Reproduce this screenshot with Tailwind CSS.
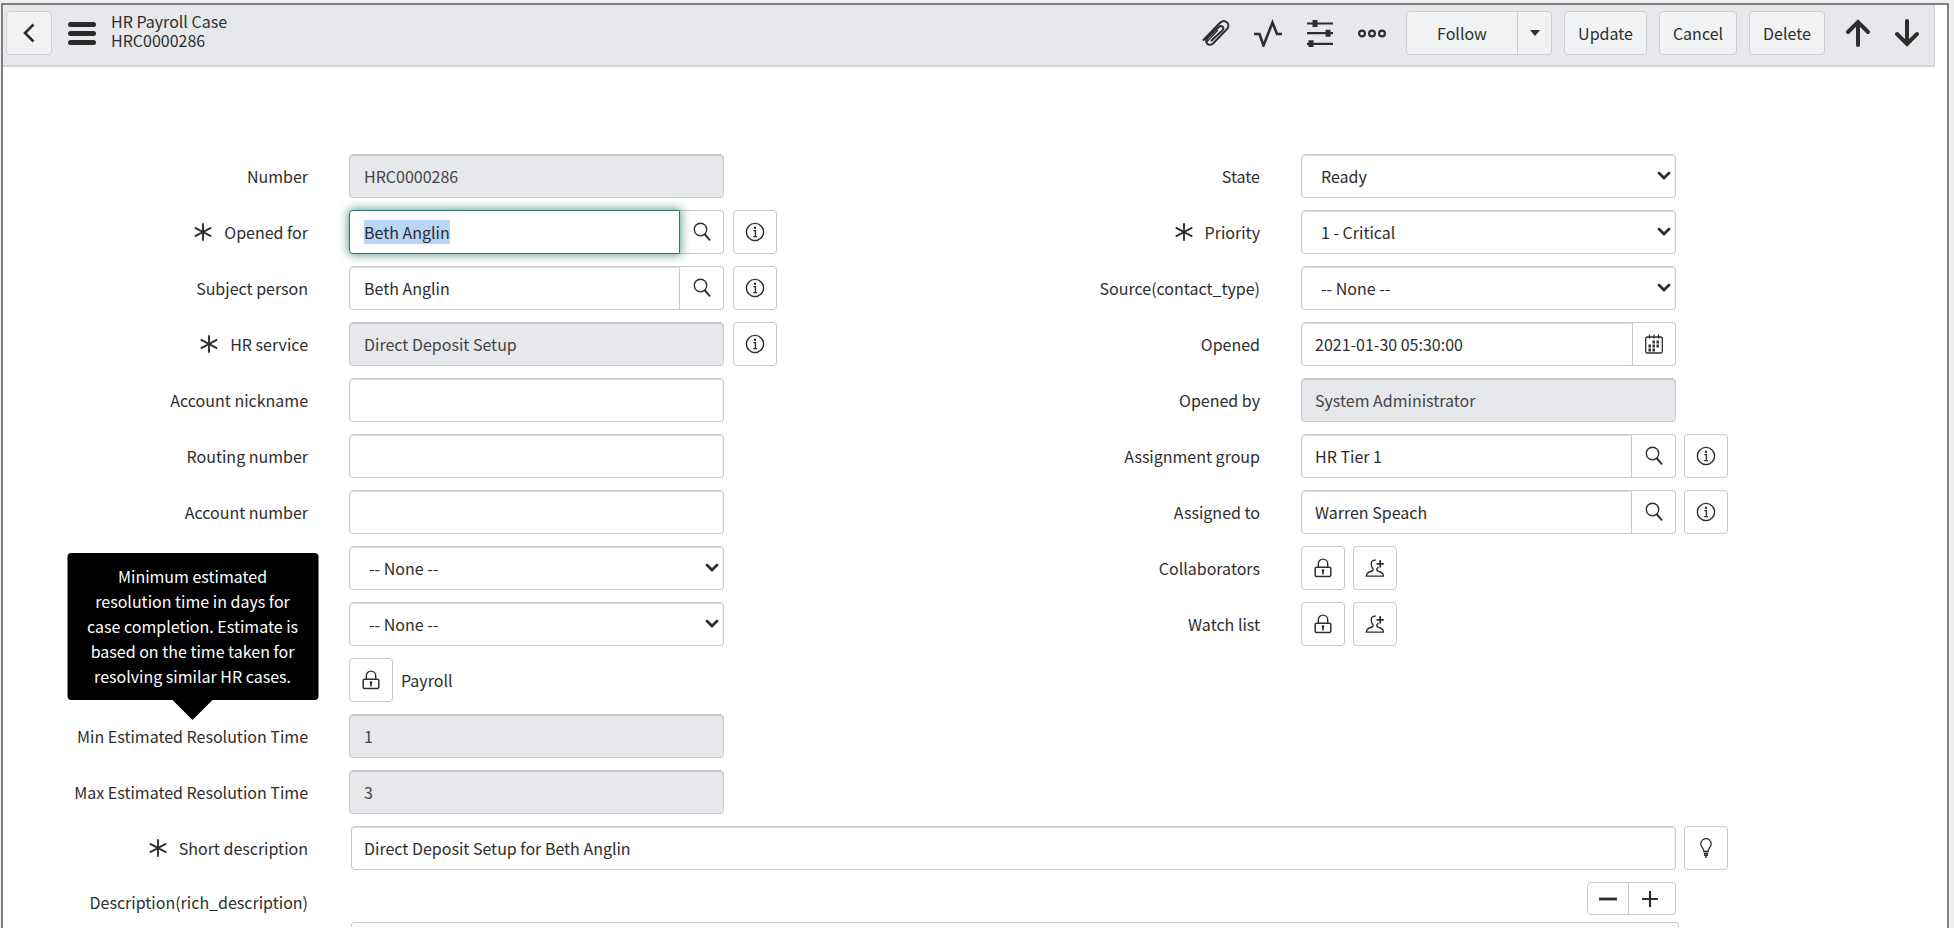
<!DOCTYPE html>
<html lang="en">
<head>
<meta charset="utf-8">
<title>HR Payroll Case HRC0000286</title>
<script src="https://cdn.jsdelivr.net/npm/@tailwindcss/browser@4"></script>
</head>
<body class="min-h-screen bg-[#eeefef] pt-[3px] pl-px pr-[5px] font-['Noto_Sans_CJK_SC',sans-serif] text-base leading-6 text-[#2e2e2e]">

<svg class="hidden" aria-hidden="true">
  <symbol id="search" viewBox="0 0 18 20" fill="none" stroke="currentColor"><ellipse cx="7.5" cy="7.5" rx="6.2" ry="6.2" stroke-width="1.4"/><path d="M11.7 12.2 17 18.3" stroke-width="2"/><path d="m10.8 13 1.8-1.6" stroke-width="1.2"/></symbol>
  <symbol id="info" viewBox="0 0 20 20"><circle cx="10" cy="10" r="8.6" fill="none" stroke="currentColor" stroke-width="1.4"/><circle cx="10" cy="5.8" r="1.2" fill="currentColor"/><path d="M8.4 8.6H10.4V14.4M8.2 14.6H12" fill="none" stroke="currentColor" stroke-width="1.4"/></symbol>
  <symbol id="lock" viewBox="0 0 18 20" fill="none" stroke="currentColor"><rect x="1.2" y="9.2" width="15.6" height="9.4" rx="1.4" stroke-width="1.5"/><path d="M4.3 9V5.8a4.7 4.7 0 0 1 9.4 0V9" stroke-width="1.4"/><path d="M9 13v3.4" stroke-width="1.6"/><circle cx="9" cy="12.6" r="1.3" fill="currentColor" stroke="none"/></symbol>
  <symbol id="person" viewBox="0 0 20 20" fill="none" stroke="currentColor" stroke-width="1.3"><path d="M11 2.200C8 1.600 6.200 3.200 6.200 6c0 2.300.7 3.700 1.900 5 .2 1.500-.5 2-2.400 2.500-3.100.8-4.300 1.800-4.500 4.700h17.300c-.2-2.900-1.500-3.900-4.600-4.700-1.700-.5-2.300-1-2.100-2.500.8-.9 1.200-1.500 1.500-2.300"/><path d="M15.200 2.300v7.200M11.600 5.900h7.200" stroke-width="1.800"/></symbol>
  <symbol id="star" viewBox="0 0 18 18"><path d="M9 .3v17.400M.8 4.600l16.400 8.800M17.200 4.600.8 13.400" fill="none" stroke="currentColor" stroke-width="1.900"/></symbol>
  <symbol id="chevron" viewBox="0 0 14 10"><path d="m2 2 5 5 5-5" fill="none" stroke="currentColor" stroke-width="2.800" stroke-linecap="round"/></symbol>
</svg>

<main class="min-h-[calc(100vh-3px)] border-2 border-b-0 border-[#808080] bg-white">
  <header class="mr-3 flex h-[62px] items-center border-b-2 border-r border-[#d2d3d5] bg-[#e7e8ec] pb-1 pl-[3px] pr-[14px]">
    <button aria-label="Back" class="flex h-11 w-[46px] items-center justify-center rounded border border-[#cbcdcf] bg-[#f0f2f4]">
      <svg class="h-5 w-3" viewBox="0 0 12 20" fill="none" stroke="currentColor" stroke-width="2.600"><path d="M10.500 1.500 2 10l8.500 8.500"/></svg>
    </button>
    <button aria-label="Form menu" class="ml-4 flex w-7 flex-col gap-1">
      <span class="h-[5px] rounded-sm bg-[#2a2a2a]"></span><span class="h-[5px] rounded-sm bg-[#2a2a2a]"></span><span class="h-[5px] rounded-sm bg-[#2a2a2a]"></span>
    </button>
    <h1 class="ml-[15px] pb-1 leading-[19px]">HR Payroll Case<br>HRC0000286</h1>

    <div class="ml-auto flex items-center gap-6">
      <button aria-label="Attachments"><svg class="size-7" viewBox="0 0 28 28" fill="none" stroke="currentColor" stroke-width="2" stroke-linecap="round"><path d="M1.500 21 17.500 4.200c2.400-2.400 5.400-2.700 7.500-.8 2 2 1.800 4.900-.5 7.200L11.300 24.300c-1.800 1.800-4.400 2-6 .4-1.700-1.600-1.500-4.100.4-6L16.800 8.100c1.200-1.200 2.800-1.300 3.800-.3s.9 2.500-.3 3.700L9.500 21.500"/><path d="M5 22.500 15.500 11.500" stroke-width="1.200"/></svg></button>
      <button aria-label="Activity"><svg class="size-7" viewBox="0 0 28 28" fill="none" stroke="currentColor" stroke-width="2.600"><path d="M0 15h5.500l4 11.500L18.500 3.500 23 15h5"/></svg></button>
      <button aria-label="Personalize form"><svg class="size-7" viewBox="0 0 28 28" fill="none" stroke="currentColor" stroke-width="2.200"><path d="M1 4.500h26M1 14.200h26M1 24.800h26"/><path d="M6.500 1h5v7h-5zM19.500 10.700h5v7h-5zM2.500 21.300h5v7h-5z" fill="currentColor" stroke="none"/></svg></button>
      <button aria-label="More options"><svg class="size-7" viewBox="0 0 28 28" fill="none" stroke="currentColor" stroke-width="2.200"><circle cx="4" cy="14.500" r="2.900"/><circle cx="14" cy="14.500" r="2.900"/><circle cx="24" cy="14.500" r="2.900"/></svg></button>
    </div>
    <div class="ml-5 flex items-center gap-3">
      <div class="flex h-11 rounded border border-[#cbcdcf] bg-[#f0f2f4]">
        <button class="w-[110px]">Follow</button>
        <button aria-label="Follow options" class="flex w-[34px] items-center justify-center border-l border-[#cbcdcf]"><svg class="h-[6px] w-[10px]" viewBox="0 0 10 6"><path d="M0 0h10L5 6z" fill="currentColor"/></svg></button>
      </div>
      <button class="h-11 w-[83px] rounded border border-[#cbcdcf] bg-[#f0f2f4]">Update</button>
      <button class="h-11 w-[78px] rounded border border-[#cbcdcf] bg-[#f0f2f4]">Cancel</button>
      <button class="h-11 w-[76px] rounded border border-[#cbcdcf] bg-[#f0f2f4]">Delete</button>
    </div>
    <div class="ml-5 flex gap-[23px]">
      <button aria-label="Previous record"><svg class="h-7 w-[26px]" viewBox="0 0 26 28" fill="none" stroke="currentColor" stroke-width="4" stroke-linecap="round"><path d="M13 26V3M3 13 13 3l10 10"/></svg></button>
      <button aria-label="Next record"><svg class="h-7 w-[26px]" viewBox="0 0 26 28" fill="none" stroke="currentColor" stroke-width="4" stroke-linecap="round"><path d="M13 2v23M3 15l10 10 10-10"/></svg></button>
    </div>
  </header>

  <form class="mr-10 pt-[87px]">
    <div class="grid grid-cols-2">
      <div class="flex flex-col gap-3">
        <div class="grid h-11 grid-cols-[346fr_375fr_231fr] items-center">
          <label for="number" class="pr-[41px] text-right">Number</label>
          <input id="number" readonly value="HRC0000286" class="h-11 w-full min-w-0 rounded border border-[#c6c8ca] bg-[#e7e8ec] px-[14px] text-[#444] shadow-[inset_0_1px_1px_#0002]">
        </div>
        <div class="grid h-11 grid-cols-[346fr_375fr_231fr] items-center">
          <label for="openedfor" class="flex items-center justify-end gap-3 pr-[41px]"><svg class="size-[18px]"><use href="#star"/></svg>Opened for</label>
          <div class="flex min-w-0">
            <div class="relative z-10 h-11 min-w-0 flex-1">
              <input id="openedfor" value="Beth Anglin" class="h-11 w-full rounded-l border border-[#2f7b68] bg-white px-[14px] shadow-[0_0_10px_1px_#2f7b68c0] outline-none selection:bg-[#b9d5f8] selection:text-[#2e2e2e]">
            </div>
            <button type="button" aria-label="Look up opened for" class="flex h-11 w-11 items-center justify-center rounded-r border border-l-0 border-[#c6c8ca]"><svg class="h-5 w-[18px]"><use href="#search"/></svg></button>
          </div>
          <button type="button" aria-label="Preview opened for" class="ml-[9px] flex size-11 items-center justify-center rounded border border-[#c6c8ca]"><svg class="size-5"><use href="#info"/></svg></button>
        </div>
        <div class="grid h-11 grid-cols-[346fr_375fr_231fr] items-center">
          <label for="subject" class="pr-[41px] text-right">Subject person</label>
          <div class="flex min-w-0">
            <input id="subject" value="Beth Anglin" class="h-11 min-w-0 flex-1 rounded-l border border-[#c6c8ca] px-[14px] shadow-[inset_0_1px_1px_#0002]">
            <button type="button" aria-label="Look up subject person" class="flex h-11 w-11 items-center justify-center rounded-r border border-l-0 border-[#c6c8ca]"><svg class="h-5 w-[18px]"><use href="#search"/></svg></button>
          </div>
          <button type="button" aria-label="Preview subject person" class="ml-[9px] flex size-11 items-center justify-center rounded border border-[#c6c8ca]"><svg class="size-5"><use href="#info"/></svg></button>
        </div>
        <div class="grid h-11 grid-cols-[346fr_375fr_231fr] items-center">
          <label for="service" class="flex items-center justify-end gap-3 pr-[41px]"><svg class="size-[18px]"><use href="#star"/></svg>HR service</label>
          <input id="service" readonly value="Direct Deposit Setup" class="h-11 w-full min-w-0 rounded border border-[#c6c8ca] bg-[#e7e8ec] px-[14px] text-[#444] shadow-[inset_0_1px_1px_#0002]">
          <button type="button" aria-label="Preview HR service" class="ml-[9px] flex size-11 items-center justify-center rounded border border-[#c6c8ca]"><svg class="size-5"><use href="#info"/></svg></button>
        </div>
        <div class="grid h-11 grid-cols-[346fr_375fr_231fr] items-center">
          <label for="nickname" class="pr-[41px] text-right">Account nickname</label>
          <input id="nickname" class="h-11 w-full min-w-0 rounded border border-[#c6c8ca] px-[14px] shadow-[inset_0_1px_1px_#0002]">
        </div>
        <div class="grid h-11 grid-cols-[346fr_375fr_231fr] items-center">
          <label for="routing" class="pr-[41px] text-right">Routing number</label>
          <input id="routing" class="h-11 w-full min-w-0 rounded border border-[#c6c8ca] px-[14px] shadow-[inset_0_1px_1px_#0002]">
        </div>
        <div class="grid h-11 grid-cols-[346fr_375fr_231fr] items-center">
          <label for="account" class="pr-[41px] text-right">Account number</label>
          <input id="account" class="h-11 w-full min-w-0 rounded border border-[#c6c8ca] px-[14px] shadow-[inset_0_1px_1px_#0002]">
        </div>
        <div class="grid h-11 grid-cols-[346fr_375fr_231fr] items-center">
          <div class="relative col-start-2 min-w-0">
            <select aria-label="Account type" class="h-11 w-full appearance-none rounded border border-[#c6c8ca] bg-white px-[19px] shadow-[inset_0_1px_1px_#0002]"><option>-- None --</option></select>
            <svg class="pointer-events-none absolute right-[5px] top-[17px] h-[10px] w-[14px]"><use href="#chevron"/></svg>
          </div>
        </div>
        <div class="grid h-11 grid-cols-[346fr_375fr_231fr] items-center">
          <div class="relative col-start-2 min-w-0">
            <select aria-label="Deposit type" class="h-11 w-full appearance-none rounded border border-[#c6c8ca] bg-white px-[19px] shadow-[inset_0_1px_1px_#0002]"><option>-- None --</option></select>
            <svg class="pointer-events-none absolute right-[5px] top-[17px] h-[10px] w-[14px]"><use href="#chevron"/></svg>
          </div>
        </div>
        <div class="grid h-11 grid-cols-[346fr_375fr_231fr] items-center">
          <div class="col-start-2 flex items-center gap-2">
            <button type="button" aria-label="Unlock" class="flex size-11 items-center justify-center rounded border border-[#c6c8ca]"><svg class="h-5 w-[18px]"><use href="#lock"/></svg></button>
            <span>Payroll</span>
          </div>
        </div>
        <div class="grid h-11 grid-cols-[346fr_375fr_231fr] items-center">
          <div class="flex justify-end pr-[41px]">
            <div class="relative">
              <label for="minres" aria-describedby="mintip">Min Estimated Resolution Time</label>
              <div id="mintip" role="tooltip" class="absolute bottom-full left-1/2 mb-1 flex w-[251px] -translate-x-1/2 flex-col items-center">
                <p class="w-full rounded bg-black px-3 py-[11px] text-center leading-[25px] text-white">Minimum estimated resolution time in days for case completion. Estimate is based on the time taken for resolving similar HR cases.</p>
                <svg class="h-5 w-10" viewBox="0 0 40 20"><path d="M0 0h40L20 20z"/></svg>
              </div>
            </div>
          </div>
          <input id="minres" readonly value="1" class="h-11 w-full min-w-0 rounded border border-[#c6c8ca] bg-[#e7e8ec] px-[14px] text-[#444] shadow-[inset_0_1px_1px_#0002]">
        </div>
        <div class="grid h-11 grid-cols-[346fr_375fr_231fr] items-center">
          <label for="maxres" class="pr-[41px] text-right">Max Estimated Resolution Time</label>
          <input id="maxres" readonly value="3" class="h-11 w-full min-w-0 rounded border border-[#c6c8ca] bg-[#e7e8ec] px-[14px] text-[#444] shadow-[inset_0_1px_1px_#0002]">
        </div>
      </div>

      <div class="flex flex-col gap-3">
        <div class="grid h-11 grid-cols-[346fr_375fr_231fr] items-center">
          <label for="state" class="pr-[41px] text-right">State</label>
          <div class="relative min-w-0">
            <select id="state" class="h-11 w-full appearance-none rounded border border-[#c6c8ca] bg-white px-[19px] shadow-[inset_0_1px_1px_#0002]"><option>Ready</option></select>
            <svg class="pointer-events-none absolute right-[5px] top-[17px] h-[10px] w-[14px]"><use href="#chevron"/></svg>
          </div>
        </div>
        <div class="grid h-11 grid-cols-[346fr_375fr_231fr] items-center">
          <label for="priority" class="flex items-center justify-end gap-3 pr-[41px]"><svg class="size-[18px]"><use href="#star"/></svg>Priority</label>
          <div class="relative min-w-0">
            <select id="priority" class="h-11 w-full appearance-none rounded border border-[#c6c8ca] bg-white px-[19px] shadow-[inset_0_1px_1px_#0002]"><option>1 - Critical</option></select>
            <svg class="pointer-events-none absolute right-[5px] top-[17px] h-[10px] w-[14px]"><use href="#chevron"/></svg>
          </div>
        </div>
        <div class="grid h-11 grid-cols-[346fr_375fr_231fr] items-center">
          <label for="source" class="pr-[41px] text-right">Source(contact_type)</label>
          <div class="relative min-w-0">
            <select id="source" class="h-11 w-full appearance-none rounded border border-[#c6c8ca] bg-white px-[19px] shadow-[inset_0_1px_1px_#0002]"><option>-- None --</option></select>
            <svg class="pointer-events-none absolute right-[5px] top-[17px] h-[10px] w-[14px]"><use href="#chevron"/></svg>
          </div>
        </div>
        <div class="grid h-11 grid-cols-[346fr_375fr_231fr] items-center">
          <label for="opened" class="pr-[41px] text-right">Opened</label>
          <div class="flex min-w-0">
            <input id="opened" value="2021-01-30 05:30:00" class="h-11 min-w-0 flex-1 rounded-l border border-[#c6c8ca] px-[13px] shadow-[inset_0_1px_1px_#0002]">
            <button type="button" aria-label="Choose date" class="flex h-11 w-[43px] items-center justify-center rounded-r border border-l-0 border-[#c6c8ca]"><svg class="h-5 w-[18px]" viewBox="0 0 18 20" fill="none" stroke="currentColor"><rect x=".7" y="3" width="16.600" height="16" rx="1.500" stroke-width="1.300"/><path d="M4.500.5v4M9 .5v4M13.500.5v4" stroke-width="1.300"/><path d="M7.500 8h2.400M11.500 8h2.400M3.500 12h2.400M7.500 12h2.400M11.500 12h2.400M3.500 16h2.400M7.500 16h2.400" stroke-width="2.800"/></svg></button>
          </div>
        </div>
        <div class="grid h-11 grid-cols-[346fr_375fr_231fr] items-center">
          <label for="openedby" class="pr-[41px] text-right">Opened by</label>
          <input id="openedby" readonly value="System Administrator" class="h-11 w-full min-w-0 rounded border border-[#c6c8ca] bg-[#e7e8ec] px-[13px] text-[#444] shadow-[inset_0_1px_1px_#0002]">
        </div>
        <div class="grid h-11 grid-cols-[346fr_375fr_231fr] items-center">
          <label for="group" class="pr-[41px] text-right">Assignment group</label>
          <div class="flex min-w-0">
            <input id="group" value="HR Tier 1" class="h-11 min-w-0 flex-1 rounded-l border border-[#c6c8ca] px-[13px] shadow-[inset_0_1px_1px_#0002]">
            <button type="button" aria-label="Look up assignment group" class="flex h-11 w-11 items-center justify-center rounded-r border border-l-0 border-[#c6c8ca]"><svg class="h-5 w-[18px]"><use href="#search"/></svg></button>
          </div>
          <button type="button" aria-label="Preview assignment group" class="ml-2 flex size-11 items-center justify-center rounded border border-[#c6c8ca]"><svg class="size-5"><use href="#info"/></svg></button>
        </div>
        <div class="grid h-11 grid-cols-[346fr_375fr_231fr] items-center">
          <label for="assigned" class="pr-[41px] text-right">Assigned to</label>
          <div class="flex min-w-0">
            <input id="assigned" value="Warren Speach" class="h-11 min-w-0 flex-1 rounded-l border border-[#c6c8ca] px-[13px] shadow-[inset_0_1px_1px_#0002]">
            <button type="button" aria-label="Look up assigned to" class="flex h-11 w-11 items-center justify-center rounded-r border border-l-0 border-[#c6c8ca]"><svg class="h-5 w-[18px]"><use href="#search"/></svg></button>
          </div>
          <button type="button" aria-label="Preview assigned to" class="ml-2 flex size-11 items-center justify-center rounded border border-[#c6c8ca]"><svg class="size-5"><use href="#info"/></svg></button>
        </div>
        <div class="grid h-11 grid-cols-[346fr_375fr_231fr] items-center">
          <span class="pr-[41px] text-right">Collaborators</span>
          <div class="flex gap-2">
            <button type="button" aria-label="Unlock collaborators" class="flex size-11 items-center justify-center rounded border border-[#c6c8ca]"><svg class="h-5 w-[18px]"><use href="#lock"/></svg></button>
            <button type="button" aria-label="Add me to collaborators" class="flex size-11 items-center justify-center rounded border border-[#c6c8ca]"><svg class="size-5"><use href="#person"/></svg></button>
          </div>
        </div>
        <div class="grid h-11 grid-cols-[346fr_375fr_231fr] items-center">
          <span class="pr-[41px] text-right">Watch list</span>
          <div class="flex gap-2">
            <button type="button" aria-label="Unlock watch list" class="flex size-11 items-center justify-center rounded border border-[#c6c8ca]"><svg class="h-5 w-[18px]"><use href="#lock"/></svg></button>
            <button type="button" aria-label="Add me to watch list" class="flex size-11 items-center justify-center rounded border border-[#c6c8ca]"><svg class="size-5"><use href="#person"/></svg></button>
          </div>
        </div>
      </div>
    </div>

    <div class="mt-3 grid grid-cols-[346fr_1327fr_231fr] items-center">
      <label for="short" class="flex items-center justify-end gap-3 pr-[41px]"><svg class="size-[18px]"><use href="#star"/></svg>Short description</label>
      <input id="short" value="Direct Deposit Setup for Beth Anglin" class="ml-0.5 h-11 min-w-0 rounded border border-[#c6c8ca] px-3 shadow-[inset_0_1px_1px_#0002]">
      <button type="button" aria-label="Suggestions" class="ml-2 flex size-11 items-center justify-center rounded border border-[#c6c8ca]"><svg class="h-5 w-3" viewBox="0 0 12 20" fill="none" stroke="currentColor" stroke-width="1.300"><path d="M4 13.500c0-3-3.200-4.300-3.200-7.700a5.200 5.200 0 0 1 10.400 0c0 3.400-3.200 4.700-3.200 7.700z"/><path d="M3.800 15.500h4.400M4 17.300h4M5 19h2" stroke-width="1.400"/></svg></button>
    </div>
    <div class="mt-3 grid grid-cols-[346fr_1327fr_231fr]">
      <label for="desc" class="pt-2 pr-[41px] text-right">Description(rich_description)</label>
      <div class="ml-0.5 -mr-[3px]">
        <div class="mr-[3px] ml-auto flex h-[33px] w-[89px] rounded border border-[#c6c8ca]">
          <button type="button" aria-label="Collapse" class="flex w-[41px] items-center justify-center border-r border-[#c6c8ca]"><svg class="size-[18px]" viewBox="0 0 18 18" stroke="currentColor" stroke-width="2.800"><path d="M0 9h18"/></svg></button>
          <button type="button" aria-label="Expand" class="flex w-[41px] items-center justify-center"><svg class="size-4" viewBox="0 0 18 18" stroke="currentColor" stroke-width="2.400"><path d="M0 9h18M9 0v18"/></svg></button>
        </div>
        <div class="mt-[7px] h-0 overflow-visible">
          <textarea id="desc" class="block h-[5px] w-full resize-none rounded-t border border-b-0 border-[#c6c8ca] bg-[#f9fafc]"></textarea>
        </div>
      </div>
    </div>
  </form>
</main>
<script>
  const openedFor = document.getElementById('openedfor');
  openedFor.focus();
  openedFor.select();
</script>
</body>
</html>
